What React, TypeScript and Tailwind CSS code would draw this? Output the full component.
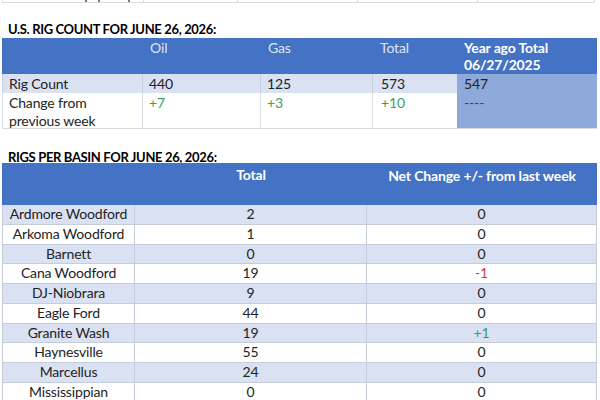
import React from "react";

const green = "text-[#3b9f5f]";
const red = "text-[#d23b35]";

const basins: { name: string; total: string; change: string; tone?: "g" | "r" }[] = [
  { name: "Ardmore Woodford", total: "2", change: "0" },
  { name: "Arkoma Woodford", total: "1", change: "0" },
  { name: "Barnett", total: "0", change: "0" },
  { name: "Cana Woodford", total: "19", change: "-1", tone: "r" },
  { name: "DJ-Niobrara", total: "9", change: "0" },
  { name: "Eagle Ford", total: "44", change: "0" },
  { name: "Granite Wash", total: "19", change: "+1", tone: "g" },
  { name: "Haynesville", total: "55", change: "0" },
  { name: "Marcellus", total: "24", change: "0" },
  { name: "Mississippian", total: "0", change: "0" },
];

export default function App() {
  return (
    <div
      className="w-[600px] h-[400px] overflow-hidden bg-white text-[#232323] flex flex-col tracking-[-0.15px]"
      style={{ fontFamily: "Lato, 'Open Sans', sans-serif" }}
    >
      {/* partial row at top */}
      <div className="ml-[2px] w-[593px] h-[3px] grid grid-cols-[142px_94px_120px_120px_117px] border-b border-[#d6dbe4]">
        <div className="border-l border-r border-[#d6dbe4] flex items-start">
          <span className="ml-[82px] w-[2px] h-[2px] bg-[#777]" />
          <span className="ml-[11px] w-[2px] h-[2px] bg-[#777]" />
          <span className="ml-[28px] w-[2px] h-[2px] bg-[#777]" />
        </div>
        <div className="border-r border-[#d6dbe4]" />
        <div className="border-r border-[#d6dbe4]" />
        <div className="border-r border-[#d6dbe4]" />
        <div className="border-r border-[#d6dbe4]" />
      </div>

      {/* heading 1 */}
      <div className="mt-[19px] ml-[8px] h-[15px] leading-[15px] text-[13px] font-bold text-black tracking-[-0.35px]">
        U.S. RIG COUNT FOR JUNE 26, 2026:
      </div>

      {/* table 1 */}
      <div className="mt-[1px] ml-[2px] w-[595px] grid grid-cols-[141px_118px_112px_84px_140px] grid-rows-[36px_19px_35px] text-[14px] border-b border-[#d6dbe4]">
        <div className="bg-[#4472c4]" />
        <div className="bg-[#4472c4] pl-[7px] pt-[1px] leading-[17px] text-[#dfe6f3]">Oil</div>
        <div className="bg-[#4472c4] pl-[7px] pt-[1px] leading-[17px] text-[#dfe6f3]">Gas</div>
        <div className="bg-[#4472c4] pl-[7px] pt-[1px] leading-[17px] text-[#dfe6f3]">Total</div>
        <div className="bg-[#4472c4] pl-[7px] pt-[1px] leading-[17px] text-white font-bold">
          Year ago Total
          <br />
          06/27/2025
        </div>

        <div className="bg-[#d9e1f2] pl-[6px] leading-[17px] flex items-center border-l border-r border-[#c9d0dd]">Rig Count</div>
        <div className="bg-[#d9e1f2] pl-[6px] leading-[17px] flex items-center border-r border-[#c9d0dd]">440</div>
        <div className="bg-[#d9e1f2] pl-[6px] leading-[17px] flex items-center border-r border-[#c9d0dd]">125</div>
        <div className="bg-[#d9e1f2] pl-[8px] leading-[17px] flex items-center">573</div>
        <div className="row-span-2 bg-[#8eaadb] pl-[7px] pt-[1px] leading-[17px]">
          <div>547</div>
          <div className="mt-[2px] text-[#3a4660]">----</div>
        </div>

        <div className="pl-[6px] pt-[1px] leading-[18px] border-l border-r border-[#d6dbe4]">
          Change from
          <br />
          previous week
        </div>
        <div className={`pl-[6px] pt-[1px] leading-[18px] border-r border-[#d6dbe4] ${green}`}>+7</div>
        <div className={`pl-[6px] pt-[1px] leading-[18px] border-r border-[#d6dbe4] ${green}`}>+3</div>
        <div className={`pl-[8px] pt-[1px] leading-[18px] ${green}`}>+10</div>
      </div>

      {/* heading 2 */}
      <div className="mt-[21px] ml-[8px] h-[15px] leading-[15px] text-[13px] font-bold text-black tracking-[-0.35px]">
        RIGS PER BASIN FOR JUNE 26, 2026:
      </div>

      {/* table 2 */}
      <div className="mt-[-2px] ml-[2px] w-[595px] flex flex-col text-[14px]">
        <div className="h-[42px] grid grid-cols-[133px_232px_230px] bg-[#4472c4] text-white font-bold leading-[17px]">
          <div />
          <div className="text-center pt-[3px]">Total</div>
          <div className="text-center pt-[4px]">Net Change +/- from last week</div>
        </div>
        {basins.map((b, i) => (
          <div
            key={b.name}
            className={`h-[19.75px] grid grid-cols-[133px_232px_230px] leading-[17px] border-b border-[#c5cdda] ${
              i % 2 === 0 ? "bg-[#d9e1f2]" : "bg-white"
            }`}
          >
            <div className="text-center border-l border-r border-[#c5cdda]">{b.name}</div>
            <div className="text-center border-r border-[#c5cdda]">{b.total}</div>
            <div
              className={`text-center border-r border-[#c5cdda] ${
                b.tone === "g" ? green : b.tone === "r" ? red : ""
              }`}
            >
              {b.change}
            </div>
          </div>
        ))}
      </div>
    </div>
  );
}
